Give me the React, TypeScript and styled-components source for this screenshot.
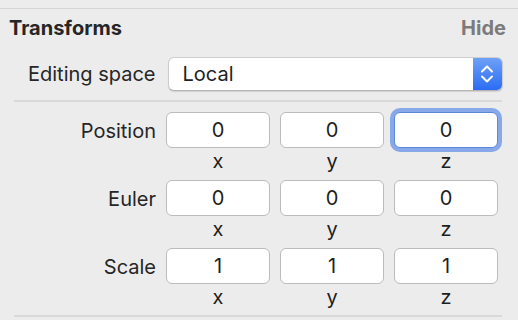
import * as React from 'react';
import styled, { createGlobalStyle } from 'styled-components';

const GlobalStyle = createGlobalStyle`
  html, body {
    margin: 0;
    padding: 0;
    background: #ececec;
  }
  body {
    font-family: Inter, "Noto Sans", "Liberation Sans", sans-serif;
    color: #222;
  }
`

const Panel = styled.div`
  margin-top: 8px;
  border-top: 1px solid #d6d6d6;
  width: 518px;
  height: 311px;
  box-sizing: border-box;
`

const Header = styled.div`
  display: flex;
  align-items: center;
  justify-content: space-between;
  height: 38px;
  padding: 0 12px 0 9px;
`

const Title = styled.span`
  font-size: 20px;
  font-weight: 700;
  color: #262626;
`

const HideLink = styled.span`
  font-size: 20px;
  font-weight: 700;
  color: #7b7b7b;
`

const EditRow = styled.div`
  display: flex;
  align-items: center;
  margin-top: 10px;
  padding-left: 28px;
  height: 34px;
`

const Label = styled.span`
  font-size: 20px;
  color: #262626;
  text-align: right;
  white-space: nowrap;
`

const Select = styled.div`
  display: flex;
  margin-left: 12px;
  width: 335px;
  height: 34px;
  box-sizing: border-box;
  background: #fff;
  border: 1px solid #cdcdcd;
  border-bottom-color: #b4b4b4;
  border-radius: 6px;
  box-shadow: 0 1px 1px rgba(0,0,0,0.12);
  overflow: hidden;
`

const SelectValue = styled.span`
  flex: 1;
  display: flex;
  align-items: center;
  padding-left: 14px;
  font-size: 20px;
  color: #1e1e1e;
`

const Stepper = styled.span`
  width: 29px;
  display: flex;
  align-items: center;
  justify-content: center;
  background: linear-gradient(#6ea1f7, #2b6cf3);
`

const Divider = styled.div`
  height: 2px;
  background: #d9d9d9;
  margin: ${p => p.$top}px 16px 0 14px;
`

const VectorGrid = styled.div`
  display: grid;
  grid-template-columns: 148px 104px 104px 104px;
  column-gap: 10px;
  row-gap: 10px;
  padding-left: 8px;
  margin-top: 10px;
`

const RowLabel = styled(Label)`
  height: 36px;
  line-height: 38px;
`

const Cell = styled.div`
  display: flex;
  flex-direction: column;
  align-items: center;
`

const NumberBox = styled.div`
  width: 100%;
  height: 36px;
  box-sizing: border-box;
  background: #fff;
  border: 1.5px solid #bcbcbc;
  border-radius: 6px;
  display: flex;
  align-items: center;
  justify-content: center;
  font-size: 20px;
  color: #1e1e1e;
  box-shadow: ${p => p.$focused ? '0 0 0 4px #87a9ea' : 'none'};
  border-color: ${p => p.$focused ? '#5d87dc' : '#bcbcbc'};
`

const Axis = styled.span`
  font-size: 20px;
  height: 22px;
  line-height: 26px;
  color: #1e1e1e;
`

const rows = [
  { name: 'Position', values: ['0', '0', '0'], focus: 2 },
  { name: 'Euler', values: ['0', '0', '0'], focus: -1 },
  { name: 'Scale', values: ['1', '1', '1'], focus: -1 },
]

const axes = ['x', 'y', 'z']

export default function App() {
  return <>
    <GlobalStyle />
    <Panel>
      <Header>
        <Title>Transforms</Title>
        <HideLink>Hide</HideLink>
      </Header>

      <EditRow>
        <Label>Editing space</Label>
        <Select>
          <SelectValue>Local</SelectValue>
          <Stepper>
            <svg width="14" height="22" viewBox="0 0 14 22" fill="none" stroke="#fff" strokeWidth="2" strokeLinecap="round" strokeLinejoin="round">
              <path d="M2 8.5 L7 3.5 L12 8.5" />
              <path d="M2 13.5 L7 18.5 L12 13.5" />
            </svg>
          </Stepper>
        </Select>
      </EditRow>

      <Divider $top={9} />

      <VectorGrid>
        {rows.map(row => <React.Fragment key={row.name}>
          <RowLabel>{row.name}</RowLabel>
          {row.values.map((v, i) =>
            <Cell key={i}>
              <NumberBox $focused={row.focus === i}>{v}</NumberBox>
              <Axis>{axes[i]}</Axis>
            </Cell>
          )}
        </React.Fragment>)}
      </VectorGrid>

      <Divider $top={9} />
    </Panel>
  </>
}
